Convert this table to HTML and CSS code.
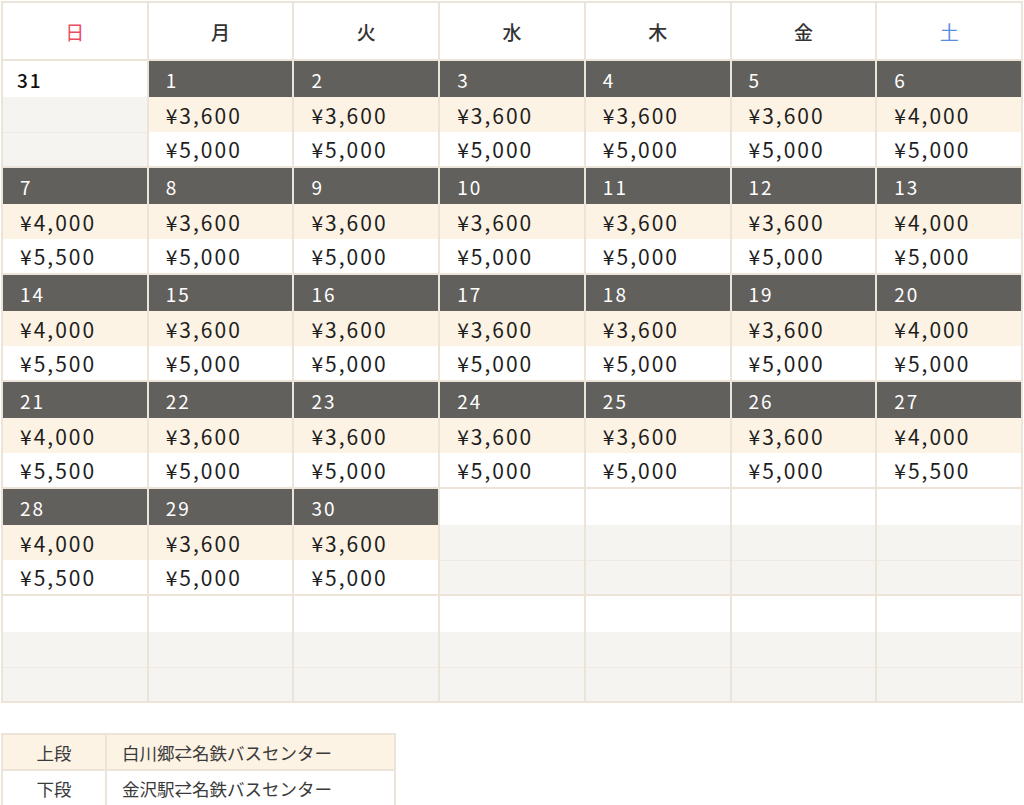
FILE: index.html
```html
<!DOCTYPE html>
<html lang="ja">
<head>
<meta charset="utf-8">
<title>運賃カレンダー</title>
<link rel="stylesheet" href="styles.css">
</head>
<body>
<div class="cal">
  <div class="hd sun">日</div>
  <div class="hd">月</div>
  <div class="hd">火</div>
  <div class="hd">水</div>
  <div class="hd">木</div>
  <div class="hd">金</div>
  <div class="hd sat">土</div>

  <div class="day other"><div class="date">31</div><div class="p1"></div><div class="p2"></div></div>
  <div class="day"><div class="date">1</div><div class="p1">¥3,600</div><div class="p2">¥5,000</div></div>
  <div class="day"><div class="date">2</div><div class="p1">¥3,600</div><div class="p2">¥5,000</div></div>
  <div class="day"><div class="date">3</div><div class="p1">¥3,600</div><div class="p2">¥5,000</div></div>
  <div class="day"><div class="date">4</div><div class="p1">¥3,600</div><div class="p2">¥5,000</div></div>
  <div class="day"><div class="date">5</div><div class="p1">¥3,600</div><div class="p2">¥5,000</div></div>
  <div class="day"><div class="date">6</div><div class="p1">¥4,000</div><div class="p2">¥5,000</div></div>

  <div class="day"><div class="date">7</div><div class="p1">¥4,000</div><div class="p2">¥5,500</div></div>
  <div class="day"><div class="date">8</div><div class="p1">¥3,600</div><div class="p2">¥5,000</div></div>
  <div class="day"><div class="date">9</div><div class="p1">¥3,600</div><div class="p2">¥5,000</div></div>
  <div class="day"><div class="date">10</div><div class="p1">¥3,600</div><div class="p2">¥5,000</div></div>
  <div class="day"><div class="date">11</div><div class="p1">¥3,600</div><div class="p2">¥5,000</div></div>
  <div class="day"><div class="date">12</div><div class="p1">¥3,600</div><div class="p2">¥5,000</div></div>
  <div class="day"><div class="date">13</div><div class="p1">¥4,000</div><div class="p2">¥5,000</div></div>

  <div class="day"><div class="date">14</div><div class="p1">¥4,000</div><div class="p2">¥5,500</div></div>
  <div class="day"><div class="date">15</div><div class="p1">¥3,600</div><div class="p2">¥5,000</div></div>
  <div class="day"><div class="date">16</div><div class="p1">¥3,600</div><div class="p2">¥5,000</div></div>
  <div class="day"><div class="date">17</div><div class="p1">¥3,600</div><div class="p2">¥5,000</div></div>
  <div class="day"><div class="date">18</div><div class="p1">¥3,600</div><div class="p2">¥5,000</div></div>
  <div class="day"><div class="date">19</div><div class="p1">¥3,600</div><div class="p2">¥5,000</div></div>
  <div class="day"><div class="date">20</div><div class="p1">¥4,000</div><div class="p2">¥5,000</div></div>

  <div class="day"><div class="date">21</div><div class="p1">¥4,000</div><div class="p2">¥5,500</div></div>
  <div class="day"><div class="date">22</div><div class="p1">¥3,600</div><div class="p2">¥5,000</div></div>
  <div class="day"><div class="date">23</div><div class="p1">¥3,600</div><div class="p2">¥5,000</div></div>
  <div class="day"><div class="date">24</div><div class="p1">¥3,600</div><div class="p2">¥5,000</div></div>
  <div class="day"><div class="date">25</div><div class="p1">¥3,600</div><div class="p2">¥5,000</div></div>
  <div class="day"><div class="date">26</div><div class="p1">¥3,600</div><div class="p2">¥5,000</div></div>
  <div class="day"><div class="date">27</div><div class="p1">¥4,000</div><div class="p2">¥5,500</div></div>

  <div class="day"><div class="date">28</div><div class="p1">¥4,000</div><div class="p2">¥5,500</div></div>
  <div class="day"><div class="date">29</div><div class="p1">¥3,600</div><div class="p2">¥5,000</div></div>
  <div class="day"><div class="date">30</div><div class="p1">¥3,600</div><div class="p2">¥5,000</div></div>
  <div class="day empty"><div class="date"></div><div class="p1"></div><div class="p2"></div></div>
  <div class="day empty"><div class="date"></div><div class="p1"></div><div class="p2"></div></div>
  <div class="day empty"><div class="date"></div><div class="p1"></div><div class="p2"></div></div>
  <div class="day empty"><div class="date"></div><div class="p1"></div><div class="p2"></div></div>

  <div class="day empty"><div class="date"></div><div class="p1"></div><div class="p2"></div></div>
  <div class="day empty"><div class="date"></div><div class="p1"></div><div class="p2"></div></div>
  <div class="day empty"><div class="date"></div><div class="p1"></div><div class="p2"></div></div>
  <div class="day empty"><div class="date"></div><div class="p1"></div><div class="p2"></div></div>
  <div class="day empty"><div class="date"></div><div class="p1"></div><div class="p2"></div></div>
  <div class="day empty"><div class="date"></div><div class="p1"></div><div class="p2"></div></div>
  <div class="day empty"><div class="date"></div><div class="p1"></div><div class="p2"></div></div>
</div>

<div class="legend">
  <div class="lg-k up">上段</div>
  <div class="lg-v up">白川郷⇄名鉄バスセンター</div>
  <div class="lg-k">下段</div>
  <div class="lg-v">金沢駅⇄名鉄バスセンター</div>
</div>
</body>
</html>
```

FILE: styles.css
```css
* { box-sizing: border-box; }
body {
  margin: 0;
  background: #fff;
  font-family: "Noto Sans CJK JP", "Noto Sans", sans-serif;
  color: #222;
}
.cal {
  margin: 1px 0 0 1px;
  width: 1022px;
  display: grid;
  grid-template-columns: repeat(7, 1fr);
  grid-template-rows: 56px repeat(6, 105px);
  gap: 2px;
  padding: 2px;
  background: #ece4d9;
}
.hd {
  background: #fff;
  display: flex;
  align-items: center;
  justify-content: center;
  font-size: 19px;
  font-weight: 500;
  color: #333;
}
.hd.sun { color: #ec4a5f; font-weight: 400; }
.hd.sat { color: #5a8ee0; font-weight: 400; }
.day {
  display: grid;
  grid-template-rows: 36px 35px 34px;
}
.day > div {
  display: flex;
  align-items: center;
  padding-left: 17px;
  letter-spacing: 2px;
}
.date {
  background: #62605d;
  color: #fff;
  font-size: 19px;
  padding-left: 18px;
}
.p1 {
  background: #fdf3e4;
  font-size: 21px;
  color: #1e1e1e;
}
.p2 {
  background: #fff;
  font-size: 21px;
  color: #1e1e1e;
}
.other .date, .empty .date {
  background: #fff;
  color: #111;
  font-weight: 500;
  padding-left: 14px;
}
.other .p1, .other .p2, .empty .p1, .empty .p2 {
  background: #f6f4f0;
}
.other .p2, .empty .p2 {
  border-top: 1px solid #efebe4;
}
.legend {
  margin: 30px 0 0 1px;
  width: 395px;
  display: grid;
  grid-template-columns: 102px 1fr;
  grid-template-rows: 34px 34px;
  gap: 2px;
  padding: 2px;
  background: #ece4d9;
  font-size: 17.5px;
  color: #3a3a3a;
}
.legend > div {
  display: flex;
  align-items: center;
  background: #fff;
}
.legend > .up { background: #fdf3e4; }
.lg-k { justify-content: center; }
.lg-v { padding-left: 15px; }
```
